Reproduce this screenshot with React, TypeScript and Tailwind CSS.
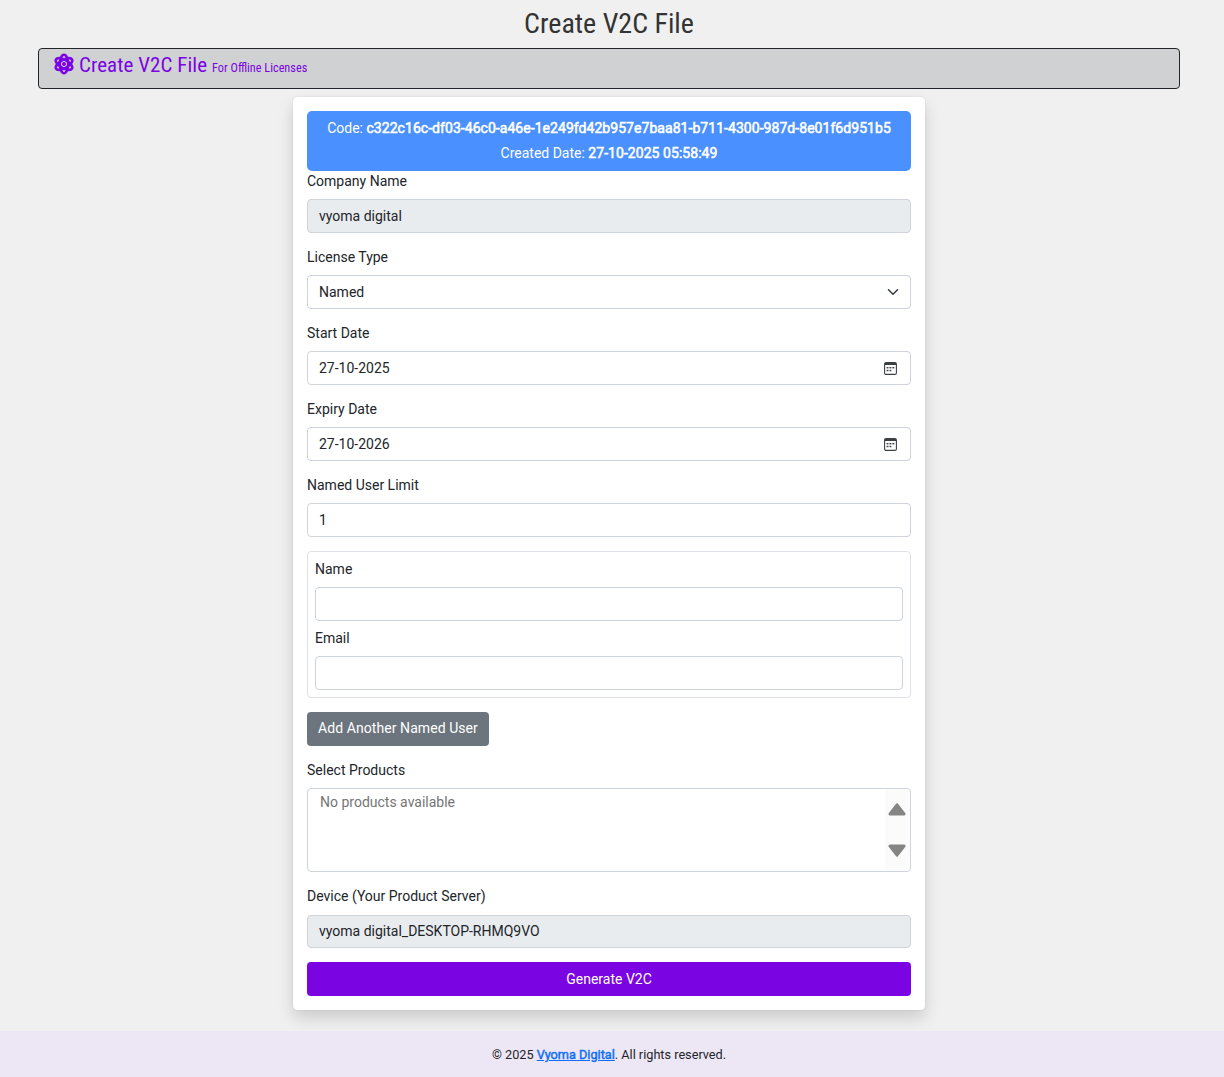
import React from "react";

const AtomIcon = () => (
  <svg width="20" height="22" viewBox="0 0 20 22" className="mr-[5px] shrink-0">
    <g fill="none" stroke="#7a04e2" strokeWidth="2.6">
      <ellipse cx="10" cy="11" rx="4.2" ry="9.2" />
      <ellipse cx="10" cy="11" rx="4.2" ry="9.2" transform="rotate(60 10 11)" />
      <ellipse cx="10" cy="11" rx="4.2" ry="9.2" transform="rotate(120 10 11)" />
    </g>
    <circle cx="10" cy="11" r="2" fill="#7a04e2" />
  </svg>
);

const Cal = () => (
  <svg width="13" height="13" viewBox="0 0 13 13" className="mr-[2px] shrink-0">
    <rect x="0.6" y="0.6" width="11.8" height="11.8" rx="1.4" fill="none" stroke="#3d4043" strokeWidth="1.1" />
    <rect x="1" y="1" width="11" height="2" fill="#3d4043" />
    <rect x="2.6" y="5" width="1.9" height="1.4" fill="#3d4043" />
    <rect x="5.5" y="5" width="1.9" height="1.4" fill="#3d4043" />
    <rect x="8.4" y="5" width="1.9" height="1.4" fill="#3d4043" />
    <rect x="2.6" y="7.8" width="1.9" height="1.4" fill="#3d4043" />
    <rect x="5.5" y="7.8" width="1.9" height="1.4" fill="#3d4043" />
  </svg>
);

const Chevron = () => (
  <svg width="16" height="12" viewBox="0 0 16 16" className="-mr-[2px] shrink-0">
    <path d="m2 5 6 6 6-6" fill="none" stroke="#343a40" strokeWidth="2" strokeLinecap="round" strokeLinejoin="round" />
  </svg>
);

const Label = ({ children, cls = "mb-2" }: { children: React.ReactNode; cls?: string }) => (
  <div className={`text-[14px] leading-[21px] text-[#212529] ${cls}`}>{children}</div>
);

const Field = ({ children, disabled = false, cls = "" }: { children?: React.ReactNode; disabled?: boolean; cls?: string }) => (
  <div className={`flex h-[34px] items-center justify-between rounded-[4px] border border-[#ced4da] px-[11px] text-[14px] text-[#212529] ${disabled ? "bg-[#e9ecef]" : "bg-white"} ${cls}`}>
    {children}
  </div>
);

const Fake = ({ children }: { children: React.ReactNode }) => (
  <span className="tracking-[0.05px] [-webkit-text-stroke:0.55px_currentColor]">{children}</span>
);

export default function App() {
  return (
    <div className="flex min-h-[1077px] flex-col bg-[#f0f0f0] font-['Roboto',sans-serif]">
      <div className="w-[1218px]">
        <h1 className="h-[48px] pt-[4px] text-center text-[28px] leading-[39px] text-[#333333] [font-stretch:75%]">
          Create V2C File
        </h1>
        <div className="mx-[38px] flex h-[41px] items-start rounded-[4px] border border-[#212529] bg-[#d0d1d3] pl-[15px] pt-[4px] text-[#7a04e2]">
          <AtomIcon />
          <span className="text-[21px] leading-[24px] tracking-[0.05px] [font-stretch:75%]">Create V2C File</span>
          <span className="ml-[5px] mt-[7px] text-[12.25px] leading-[16px] [font-stretch:75%]">For Offline Licenses</span>
        </div>
        <div className="mx-auto mt-[8px] w-[632px] rounded-[4px] border border-white bg-white px-[13px] pb-[13px] pt-[13px] shadow-[0_8px_16px_rgba(0,0,0,0.15),0_0_0_1px_rgba(0,0,0,0.03)]">
          <div className="h-[60px] rounded-[5px] bg-[#4a90ff] pt-[5px] text-center text-[14px] leading-[25px] text-white">
            <div>Code: <Fake>c322c16c-df03-46c0-a46e-1e249fd42b957e7baa81-b711-4300-987d-8e01f6d951b5</Fake></div>
            <div>Created Date: <Fake>27-10-2025 05:58:49</Fake></div>
          </div>
          <Label cls="mb-[7px]">Company Name</Label>
          <Field disabled>vyoma digital</Field>
          <Label cls="mt-[14px] mb-[7px]">License Type</Label>
          <Field>Named<Chevron /></Field>
          <Label cls="mt-[14px] mb-[7px]">Start Date</Label>
          <Field>27-10-2025<span className="flex"><Cal /></span></Field>
          <Label cls="mt-[14px] mb-[7px]">Expiry Date</Label>
          <Field>27-10-2026<span className="flex"><Cal /></span></Field>
          <Label cls="mt-[14px] mb-[7px]">Named User Limit</Label>
          <Field>1</Field>
          <div className="mt-[14px] h-[147px] rounded-[4px] border border-[#dee2e6] px-[7px] pt-[7px]">
            <Label cls="mb-[7px]">Name</Label>
            <Field />
            <Label cls="mt-[7px] mb-[7px]">Email</Label>
            <Field />
          </div>
          <button className="mt-[14px] block h-[34px] w-[182px] rounded-[4px] bg-[#6c757d] pb-[1px] text-[14px] tracking-[0.07px] text-white">Add Another Named User</button>
          <Label cls="mt-[14px] mb-[7px]">Select Products</Label>
          <div className="flex h-[84px] justify-between rounded-[4px] border border-[#ced4da]">
            <div className="px-[12px] py-[3px] text-[14px] leading-[21px] text-[#757575]">No products available</div>
            <div className="flex w-[25px] flex-col items-start justify-between rounded-r-[4px] bg-[#fbfbfb] py-[14px] pl-[3px]">
              <svg width="18" height="13" viewBox="0 0 18 13"><path d="M9 1.8 L16 11 H2 Z" fill="#858585" stroke="#858585" strokeWidth="3" strokeLinejoin="round" /></svg>
              <svg width="18" height="13" viewBox="0 0 18 13"><path d="M9 11.2 L16 2 H2 Z" fill="#858585" stroke="#858585" strokeWidth="3" strokeLinejoin="round" /></svg>
            </div>
          </div>
          <Label cls="mt-[14px] mb-[8px]">Device (Your Product Server)</Label>
          <Field disabled cls="!h-[33px]">vyoma digital_DESKTOP-RHMQ9VO</Field>
          <button className="mt-[14px] block h-[34px] w-full rounded-[4px] bg-[#7a04e2] text-[14px] text-white">Generate V2C</button>
        </div>
      </div>
      <div className="mt-[21px] flex h-[46px] items-center justify-center bg-[#ede6f5] pr-[6px] pt-[1px] text-[12.7px] text-[#212529]">
        <span>© 2025 <a href="#" className="text-[#0d6efd] underline [-webkit-text-stroke:0.45px_currentColor]">Vyoma Digital</a>. All rights reserved.</span>
      </div>
    </div>
  );
}
